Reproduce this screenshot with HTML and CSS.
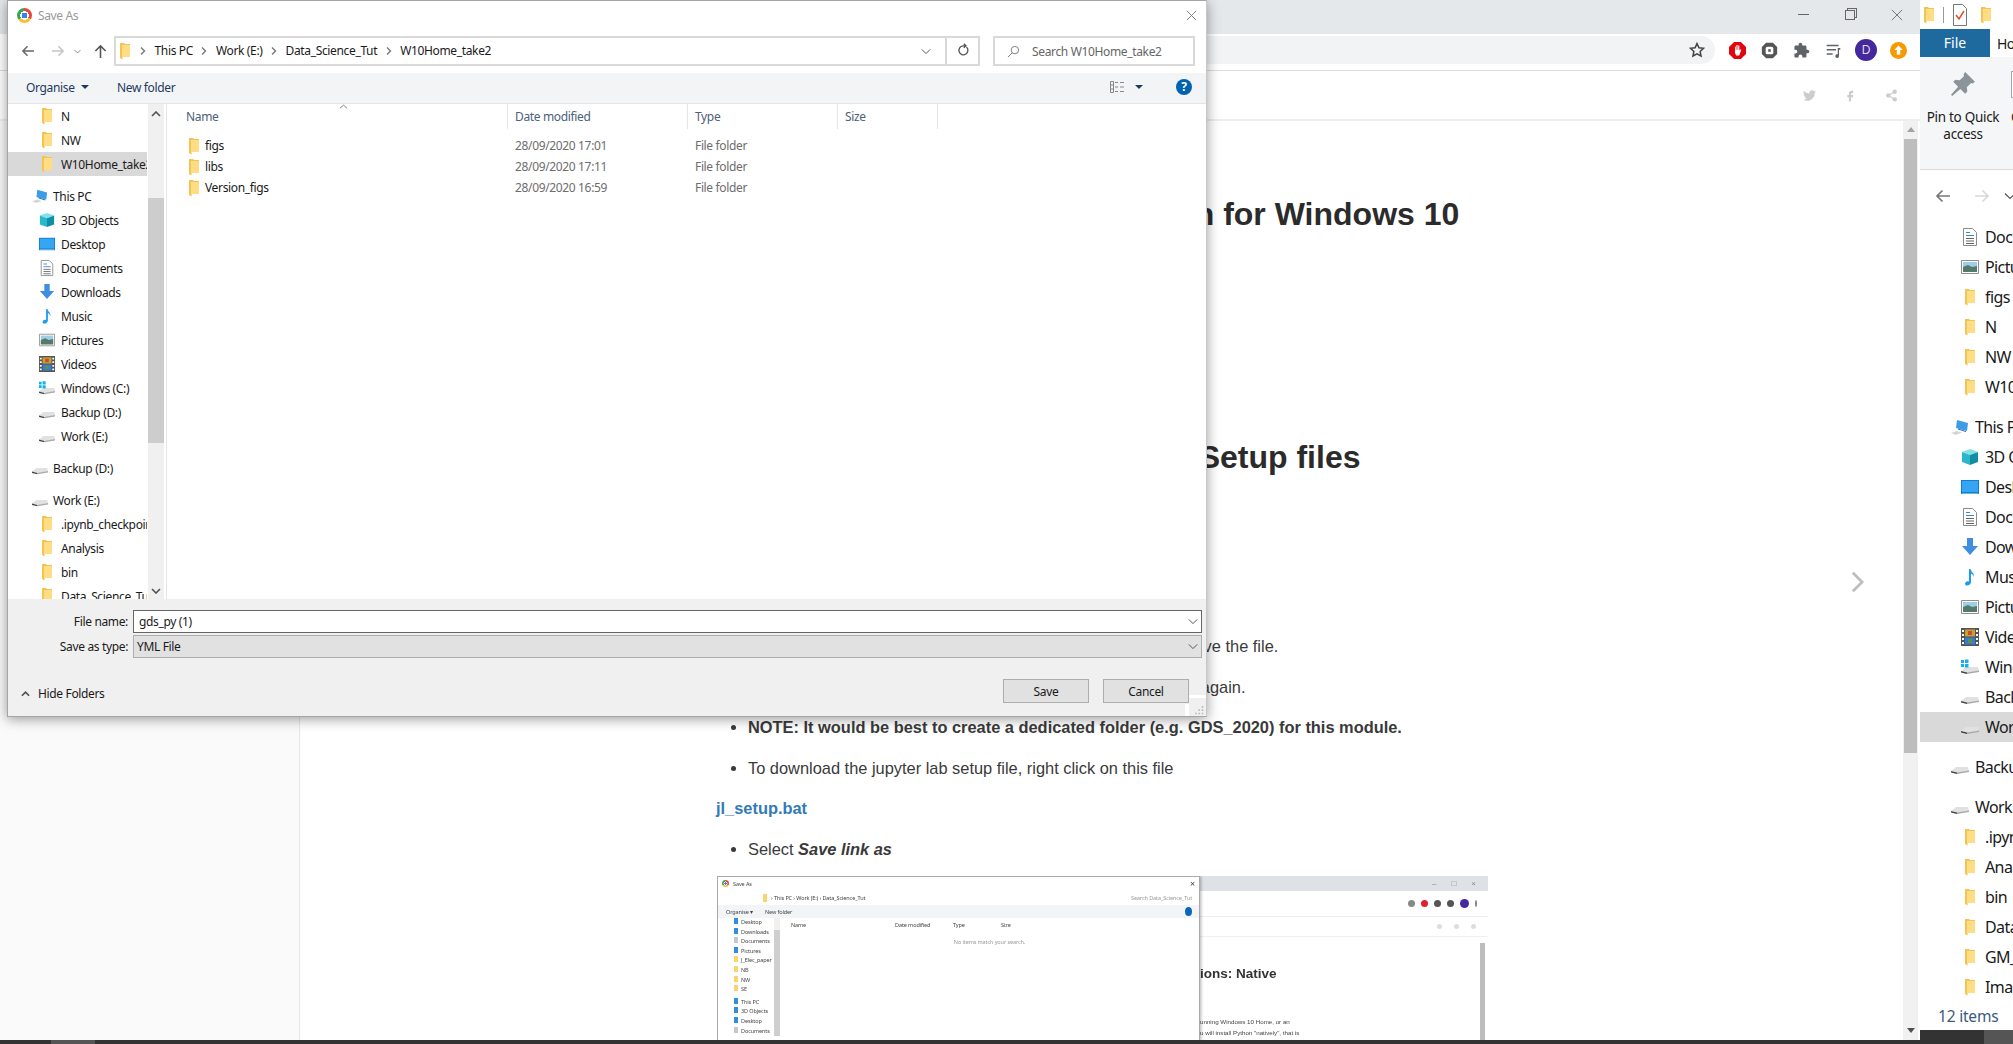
FILE: index.html
```html
<!DOCTYPE html>
<html lang="en">
<head>
  <meta charset="UTF-8" />
  <title>Save As</title>
  <link rel="stylesheet" href="styles.css">
</head>
<body>
  <svg class="sprites" width="0" height="0">
    <symbol id="folder" viewBox="0 0 16 18">
      <path fill="#f4c453" d="M3 1h4l1 1h5v13H5.500v2.500L3 16z"/>
      <path fill="#fedd85" d="M5 3h8v12H5.500v2.500L5 17z"/>
    </symbol>
    <symbol id="pc" viewBox="0 0 18 18">
      <path fill="#3c9de6" d="M6 2l11 3-1 8-11-3z"/>
      <path fill="#1d6fb8" d="M7 10.500l8 2.500v1l-8-2.500z"/>
      <path fill="#d3d6d9" d="M0 15l6-2 5 1.500-6 2.500z"/>
    </symbol>
    <symbol id="cube" viewBox="0 0 18 18">
      <path fill="#7fe3ea" d="M9 1l8 3-8 3-8-3z"/>
      <path fill="#2bb7c9" d="M1 4l8 3v10l-8-3z"/>
      <path fill="#0f8ea6" d="M17 4L9 7v10l8-3z"/>
    </symbol>
    <symbol id="desktop" viewBox="0 0 18 18">
      <path fill="#0f7fd6" d="M0 2h18v14H0z"/>
      <path fill="#36a6f2" d="M1 3h16v11H1z"/>
      <path fill="#cfe9fb" d="M1 15h16v.5H1z"/>
    </symbol>
    <symbol id="doc" viewBox="0 0 18 18">
      <path fill="#fff" stroke="#8b8b8b" d="M2.500.5h9l4 4v13h-13z"/>
      <path fill="none" stroke="#3a86c8" d="M5 4.500h4M5 7.500h8"/>
      <path fill="none" stroke="#666" d="M5 10.500h8M5 13h8M5 15.500h8"/>
    </symbol>
    <symbol id="download" viewBox="0 0 18 18">
      <path fill="#3f8fe0" d="M6 0h6v8h5l-8 9-8-9h5z"/>
    </symbol>
    <symbol id="music" viewBox="0 0 18 18">
      <path fill="#1c9bf0" d="M8 1h1.500c.5 3 4 4 3.500 8-.5-2-2-3-3-3.200V14c0 2-2 3.500-4 3.500S3.500 16 4.500 14.500 7 13 8 13.500z"/>
    </symbol>
    <symbol id="pictures" viewBox="0 0 18 18">
      <path fill="#fff" stroke="#8f8f8f" d="M.5 2.500h17v13H.5z"/>
      <path fill="#9fcfe8" d="M2 4h14v5H2z"/>
      <path fill="#55796a" d="M2 9l5-2 4 2 5-1v6H2z"/>
    </symbol>
    <symbol id="videos" viewBox="0 0 18 18">
      <path fill="#555" d="M0 0h18v18H0z"/>
      <path fill="#c9a12c" d="M4 1.500h10v7H4z"/>
      <path fill="#2f7fd8" d="M4 9.500h10v7H4z"/>
      <path fill="#c94a3a" d="M7 3h4v4H7z"/>
      <path fill="#6d8d3a" d="M7 11h4v4H7z"/>
      <path fill="#fff" d="M1 2h2v2H1zM1 6h2v2H1zM1 10h2v2H1zM1 14h2v2H1zM15 2h2v2h-2zM15 6h2v2h-2zM15 10h2v2h-2zM15 14h2v2h-2z"/>
    </symbol>
    <symbol id="drive" viewBox="0 0 18 18">
      <path fill="#dfe1e3" d="M0 13l5-4h12l1 3.500-12 3z"/>
      <path fill="#444" d="M0 13l6 1.500v1.500L0 14.500z"/>
      <path fill="#aaa" d="M6 14.500l12-2V14L6 16z"/>
    </symbol>
    <symbol id="windrive" viewBox="0 0 18 18">
      <path fill="#dfe1e3" d="M0 13l5-4h12l1 3.500-12 3z"/>
      <path fill="#444" d="M0 13l6 1.500v1.500L0 14.500z"/>
      <path fill="#aaa" d="M6 14.500l12-2V14L6 16z"/>
      <path fill="#12b2f2" d="M0 2h3v3H0zM4 1.500h3.500V5H4zM0 6h3v3H0zM4 6h3.500v3.500H4z"/>
    </symbol>
    <symbol id="chev-right" viewBox="0 0 8 10">
      <path fill="none" stroke="#777" stroke-width="1.400" d="M2 1.500L5.500 5 2 8.500"/>
    </symbol>
    <symbol id="chev-down" viewBox="0 0 12 8">
      <path fill="none" stroke="#555" stroke-width="1.200" d="M1 1.500l5 5 5-5"/>
    </symbol>
    <symbol id="arrow-left" viewBox="0 0 16 14">
      <path fill="none" stroke="currentColor" stroke-width="1.700" d="M15 7H2M7.500 1.500L2 7l5.500 5.500"/>
    </symbol>
    <symbol id="arrow-right" viewBox="0 0 16 14">
      <path fill="none" stroke="currentColor" stroke-width="1.700" d="M1 7h13M8.500 1.500L14 7l-5.500 5.500"/>
    </symbol>
  </svg>

  <div class="chrome-win">
    <div class="chrome-titlebar">
      <span class="win-min"></span>
      <span class="win-restore"></span>
      <svg class="win-close" viewBox="0 0 14 14"><path fill="none" stroke="#666" d="M1 1l12 12M13 1L1 13"/></svg>
    </div>
    <div class="chrome-toolbar">
      <div class="url-pill">
        <svg class="star" viewBox="0 0 24 24"><path fill="none" stroke="#444" stroke-width="2" d="M12 3.500l2.600 5.600 6.100.7-4.500 4.200 1.200 6-5.400-3-5.400 3 1.200-6-4.500-4.200 6.100-.7z"/></svg>
      </div>
      <div class="ext-icons">
        <svg class="ext" viewBox="0 0 20 20"><path fill="#e0060c" d="M6 0h8l6 6v8l-6 6H6l-6-6V6z"/><path fill="#fff" d="M7 5.500h1V9h.7V3.500h1.400V9h.7V4h1.400v6l1.300-1.500 1 .7L12 16H8.500L7 13z"/></svg>
        <svg class="ext" viewBox="0 0 20 20"><path fill="#555" d="M6 1h8l5 5v8l-5 5H6l-5-5V6z"/><rect x="5.500" y="5.500" width="9" height="9" rx="2" fill="#fff"/><rect x="8.500" y="8.500" width="3" height="3" fill="#555"/></svg>
        <svg class="ext" viewBox="0 0 24 24"><path fill="#5f6368" d="M20.500 11H19V7c0-1.100-.9-2-2-2h-4V3.500C13 2.120 11.880 1 10.500 1S8 2.120 8 3.500V5H4c-1.100 0-2 .9-2 2v3.800h1.500c1.490 0 2.700 1.210 2.700 2.700s-1.210 2.700-2.700 2.700H2V20c0 1.100.9 2 2 2h3.800v-1.500c0-1.490 1.210-2.700 2.700-2.700s2.700 1.210 2.700 2.700V22H17c1.100 0 2-.9 2-2v-4h1.500c1.380 0 2.500-1.120 2.500-2.500S21.880 11 20.500 11z"/></svg>
        <svg class="ext" viewBox="0 0 20 20"><path fill="none" stroke="#5f6368" stroke-width="1.800" d="M2 4h14M2 9h11M2 14h7"/><path fill="#5f6368" d="M15 7h3v2h-1.500v7.500a2.200 2.200 0 1 1-1.500-2z"/></svg>
        <span class="avatar">D</span>
        <svg class="ext" viewBox="0 0 20 20"><circle cx="10" cy="10" r="10" fill="#f59a00"/><path fill="#fff" d="M10 4l5 5.500h-3V15H8V9.500H5z"/></svg>
      </div>
    </div>
    <div class="site-header">
      <svg class="social" viewBox="0 0 24 24"><path d="M23.950 4.570a10 10 0 0 1-2.820.77 4.960 4.960 0 0 0 2.160-2.720c-.95.55-2 .96-3.120 1.190a4.920 4.920 0 0 0-8.380 4.480C7.690 8.100 4.070 6.130 1.640 3.160a4.820 4.820 0 0 0-.66 2.480c0 1.710.87 3.210 2.190 4.100a4.900 4.900 0 0 1-2.230-.62v.06a4.920 4.920 0 0 0 3.950 4.830c-.72.2-1.490.23-2.220.08a4.930 4.930 0 0 0 4.600 3.420A9.870 9.870 0 0 1 0 19.540a14 14 0 0 0 7.560 2.210c9.050 0 14-7.500 14-13.980 0-.21 0-.42-.02-.63a9.940 9.940 0 0 0 2.460-2.550z"/></svg>
      <svg class="social" viewBox="0 0 24 24"><path d="M14 8h3V3h-3c-3 0-5 2.200-5 5v3H6v4h3v8h4v-8h3.500l.5-4h-4V9c0-.6.4-1 1-1z"/></svg>
      <svg class="social" viewBox="0 0 24 24"><circle cx="18" cy="5" r="4"/><circle cx="6" cy="12" r="4"/><circle cx="18" cy="19" r="4"/><path stroke="#ccc" stroke-width="2" d="M6 12l12-7M6 12l12 7"/></svg>
    </div>
    <div class="site-main">
      <div class="sidebar"></div>
      <div class="article">
        <h1 class="title-a">Python Installation for Windows 10</h1>
        <h2 class="title-b">Download the Setup files</h2>
        <ul class="steps">
          <li>In the Save As dialog, browse to the module folder and then save the file.</li>
          <li>If the name shows gds_py (1), delete old files and download it again.</li>
          <li><b>NOTE: It would be best to create a dedicated folder (e.g. GDS_2020) for this module.</b></li>
          <li>To download the jupyter lab setup file, right click on this file</li>
        </ul>
        <p class="file-link">jl_setup.bat</p>
        <ul class="steps">
          <li>Select <b><i>Save link as</i></b></li>
        </ul>

        <div class="shot">
          <div class="shot-strip">
            <span class="shot-ctl">&#8211;</span><span class="shot-ctl">&#9633;</span><span class="shot-ctl">&#215;</span>
          </div>
          <div class="shot-bar">
            <span class="shot-dot grey"></span><span class="shot-dot red"></span><span class="shot-dot dark"></span><span class="shot-dot dark"></span><span class="shot-dot purple"></span><span class="shot-dot grey small"></span>
          </div>
          <div class="shot-social"><span class="shot-dot pale"></span><span class="shot-dot pale"></span><span class="shot-dot pale"></span></div>
          <div class="shot-page">
            <div class="shot-text">
              <div class="shot-h">ions: Native</div>
              <div class="shot-p">unning Windows 10 Home, or an</div>
              <div class="shot-p">u will install Python "natively", that is</div>
            </div>
            <div class="shot-scroll"></div>
          </div>

          <div class="shot-dialog">
            <div class="shot-dtitle"><span class="logo small"></span>Save As<span class="shot-x">&#215;</span></div>
            <div class="shot-daddr">
              <span class="shot-crumbs"><i class="shot-fold"></i>&#8250; This PC &#8250; Work (E:) &#8250; Data_Science_Tut</span>
              <span class="shot-search">Search Data_Science_Tut</span>
            </div>
            <div class="shot-dtools"><span>Organise &#9662;</span><span>New folder</span><i class="shot-help"></i></div>
            <div class="shot-dbody">
              <div class="shot-nav">
                <div class="blue">Desktop</div>
                <div class="blue">Downloads</div>
                <div class="grey">Documents</div>
                <div class="blue">Pictures</div>
                <div>J_Elec_paper</div>
                <div>NB</div>
                <div>NW</div>
                <div>SE</div>
                <div class="blue top">This PC</div>
                <div class="blue">3D Objects</div>
                <div class="blue">Desktop</div>
                <div class="grey">Documents</div>
              </div>
              <div class="shot-files">
                <div class="shot-cols"><span>Name</span><span>Date modified</span><span>Type</span><span>Size</span></div>
                <div class="shot-empty">No items match your search.</div>
              </div>
            </div>
          </div>
        </div>
      </div>
      <div class="page-scroll">
        <span class="tri up"></span>
        <div class="page-thumb"></div>
        <span class="tri down"></span>
      </div>
      <svg class="next-arrow" viewBox="0 0 14 24"><path fill="none" stroke="#bdbdbd" stroke-width="3" d="M2 2l10 10L2 22"/></svg>
    </div>
  </div>

  <div class="explorer">
    <div class="ex-quick">
      <svg class="ico"><use href="#folder"/></svg>
      <span class="ex-sep"></span>
      <svg class="ex-check" viewBox="0 0 14 22"><path fill="#fff" stroke="#777" d="M.5.500h9l4 4v17H.5z"/><path fill="none" stroke="#e2502a" stroke-width="1.500" d="M3 11l3 4 5-8"/></svg>
      <svg class="ico"><use href="#folder"/></svg>
    </div>
    <div class="ex-tabs"><span class="ex-file">File</span><span class="ex-home">Home</span></div>
    <div class="ex-ribbon">
      <div class="ex-pin">
        <svg class="pin-ico" viewBox="0 0 24 24"><path fill="#8a9499" d="M14 1l9 9-2 1.500-1.500-.5-4 4 .5 4-2 2-4.500-4.500L2 23l-1-1 6.500-7.500L3 10l2-2 4 .5 4-4-.5-1.500z"/></svg>
        <span>Pin to Quick access</span>
      </div>
      <div class="ex-copy">
        <span class="copy-box"></span>
        <span>Copy</span>
      </div>
    </div>
    <div class="ex-nav">
      <svg class="ex-back"><use href="#arrow-left"/></svg>
      <svg class="ex-forward"><use href="#arrow-right"/></svg>
      <svg class="ex-drop"><use href="#chev-down"/></svg>
    </div>
    <div class="ex-tree">
      <div class="ex-row"><svg class="ex-ico"><use href="#doc"/></svg>Documents</div>
      <div class="ex-row"><svg class="ex-ico"><use href="#pictures"/></svg>Pictures</div>
      <div class="ex-row"><svg class="ex-ico"><use href="#folder"/></svg>figs</div>
      <div class="ex-row"><svg class="ex-ico"><use href="#folder"/></svg>N</div>
      <div class="ex-row"><svg class="ex-ico"><use href="#folder"/></svg>NW</div>
      <div class="ex-row"><svg class="ex-ico"><use href="#folder"/></svg>W10Home_take2</div>
      <div class="ex-row root"><svg class="ex-ico"><use href="#pc"/></svg>This PC</div>
      <div class="ex-row"><svg class="ex-ico"><use href="#cube"/></svg>3D Objects</div>
      <div class="ex-row"><svg class="ex-ico"><use href="#desktop"/></svg>Desktop</div>
      <div class="ex-row"><svg class="ex-ico"><use href="#doc"/></svg>Documents</div>
      <div class="ex-row"><svg class="ex-ico"><use href="#download"/></svg>Downloads</div>
      <div class="ex-row"><svg class="ex-ico"><use href="#music"/></svg>Music</div>
      <div class="ex-row"><svg class="ex-ico"><use href="#pictures"/></svg>Pictures</div>
      <div class="ex-row"><svg class="ex-ico"><use href="#videos"/></svg>Videos</div>
      <div class="ex-row"><svg class="ex-ico"><use href="#windrive"/></svg>Windows (C:)</div>
      <div class="ex-row"><svg class="ex-ico"><use href="#drive"/></svg>Backup (D:)</div>
      <div class="ex-row active"><svg class="ex-ico"><use href="#drive"/></svg>Work (E:)</div>
      <div class="ex-row root"><svg class="ex-ico"><use href="#drive"/></svg>Backup (D:)</div>
      <div class="ex-row root"><svg class="ex-ico"><use href="#drive"/></svg>Work (E:)</div>
      <div class="ex-row"><svg class="ex-ico"><use href="#folder"/></svg>.ipynb_checkpoints</div>
      <div class="ex-row"><svg class="ex-ico"><use href="#folder"/></svg>Analysis</div>
      <div class="ex-row"><svg class="ex-ico"><use href="#folder"/></svg>bin</div>
      <div class="ex-row"><svg class="ex-ico"><use href="#folder"/></svg>Data_Science_Tut</div>
      <div class="ex-row"><svg class="ex-ico"><use href="#folder"/></svg>GM_paper</div>
      <div class="ex-row"><svg class="ex-ico"><use href="#folder"/></svg>Images</div>
    </div>
    <div class="ex-status">12 items</div>
  </div>

  <div class="taskbar"><span class="task-item"></span></div>
  <div class="taskbar-right"><span class="task-item-r"></span></div>

  <div class="dialog">
    <div class="dlg-title">
      <span class="logo"></span>
      <span class="dlg-caption">Save As</span>
      <svg class="dlg-close" viewBox="0 0 12 12"><path fill="none" stroke="#777" d="M1 1l10 10M11 1L1 11"/></svg>
    </div>
    <div class="dlg-address">
      <div class="dlg-navbtns">
        <svg class="nav-back"><use href="#arrow-left"/></svg>
        <svg class="nav-forward"><use href="#arrow-right"/></svg>
        <svg class="nav-drop"><use href="#chev-down"/></svg>
        <svg class="nav-up" viewBox="0 0 14 16"><path fill="none" stroke="#555" stroke-width="1.700" d="M7 15V2M1.500 7.500L7 2l5.500 5.500"/></svg>
      </div>
      <div class="addr-box">
        <svg class="ico"><use href="#folder"/></svg>
        <svg class="crumb-sep"><use href="#chev-right"/></svg><span>This PC</span>
        <svg class="crumb-sep"><use href="#chev-right"/></svg><span>Work (E:)</span>
        <svg class="crumb-sep"><use href="#chev-right"/></svg><span>Data_Science_Tut</span>
        <svg class="crumb-sep"><use href="#chev-right"/></svg><span>W10Home_take2</span>
        <svg class="addr-drop"><use href="#chev-down"/></svg>
        <span class="addr-refresh">
          <svg viewBox="0 0 12 14"><path fill="none" stroke="#555" stroke-width="1.300" d="M9.500 4A4.500 4.500 0 1 1 6 2.800H9M6.800.8L9 2.800 6.800 4.800"/></svg>
        </span>
      </div>
      <div class="search-box">
        <svg viewBox="0 0 14 14"><circle cx="8.500" cy="5.500" r="4" fill="none" stroke="#777"/><path stroke="#777" d="M5.500 8.500L1 13"/></svg>
        <span>Search W10Home_take2</span>
      </div>
    </div>
    <div class="dlg-tools">
      <span class="tool organise">Organise<i class="caret"></i></span>
      <span class="tool">New folder</span>
      <span class="tool-gap"></span>
      <svg class="view-ico" viewBox="0 0 16 14"><path fill="none" stroke="#888" d="M.5 1.500h3v11h-3zM.5 5h3M.5 9h3"/><path stroke="#888" d="M5 2.500h3M10 2.500h4M5 7h3M10 7h4M5 11.500h3M10 11.500h4"/></svg>
      <i class="caret view-caret"></i>
      <span class="help">?</span>
    </div>
    <div class="dlg-body">
      <div class="dlg-tree">
        <div class="tree-row"><svg class="ico"><use href="#folder"/></svg>N</div>
        <div class="tree-row"><svg class="ico"><use href="#folder"/></svg>NW</div>
        <div class="tree-row active"><svg class="ico"><use href="#folder"/></svg>W10Home_take2</div>
        <div class="tree-row root"><svg class="ico"><use href="#pc"/></svg>This PC</div>
        <div class="tree-row"><svg class="ico"><use href="#cube"/></svg>3D Objects</div>
        <div class="tree-row"><svg class="ico"><use href="#desktop"/></svg>Desktop</div>
        <div class="tree-row"><svg class="ico"><use href="#doc"/></svg>Documents</div>
        <div class="tree-row"><svg class="ico"><use href="#download"/></svg>Downloads</div>
        <div class="tree-row"><svg class="ico"><use href="#music"/></svg>Music</div>
        <div class="tree-row"><svg class="ico"><use href="#pictures"/></svg>Pictures</div>
        <div class="tree-row"><svg class="ico"><use href="#videos"/></svg>Videos</div>
        <div class="tree-row"><svg class="ico"><use href="#windrive"/></svg>Windows (C:)</div>
        <div class="tree-row"><svg class="ico"><use href="#drive"/></svg>Backup (D:)</div>
        <div class="tree-row"><svg class="ico"><use href="#drive"/></svg>Work (E:)</div>
        <div class="tree-row root"><svg class="ico"><use href="#drive"/></svg>Backup (D:)</div>
        <div class="tree-row root"><svg class="ico"><use href="#drive"/></svg>Work (E:)</div>
        <div class="tree-row"><svg class="ico"><use href="#folder"/></svg>.ipynb_checkpoints</div>
        <div class="tree-row"><svg class="ico"><use href="#folder"/></svg>Analysis</div>
        <div class="tree-row"><svg class="ico"><use href="#folder"/></svg>bin</div>
        <div class="tree-row"><svg class="ico"><use href="#folder"/></svg>Data_Science_Tut</div>
      </div>
      <div class="tree-scroll">
        <svg class="sb-arrow" viewBox="0 0 10 6"><path fill="none" stroke="#505050" stroke-width="1.600" d="M1 5l4-4 4 4"/></svg>
        <div class="tree-thumb"></div>
        <svg class="sb-arrow bottom" viewBox="0 0 10 6"><path fill="none" stroke="#505050" stroke-width="1.600" d="M1 1l4 4 4-4"/></svg>
      </div>
      <div class="dlg-files">
        <div class="file-cols">
          <span class="col name">Name</span>
          <span class="col date">Date modified</span>
          <span class="col type">Type</span>
          <span class="col size">Size</span>
          <svg class="sort-up" viewBox="0 0 10 5"><path fill="none" stroke="#777" d="M1 4.500L5 1l4 3.500"/></svg>
        </div>
        <div class="file-row">
          <span class="fname"><svg class="ico"><use href="#folder"/></svg>figs</span><span class="fdate">28/09/2020 17:01</span><span class="ftype">File folder</span>
        </div>
        <div class="file-row">
          <span class="fname"><svg class="ico"><use href="#folder"/></svg>libs</span><span class="fdate">28/09/2020 17:11</span><span class="ftype">File folder</span>
        </div>
        <div class="file-row">
          <span class="fname"><svg class="ico"><use href="#folder"/></svg>Version_figs</span><span class="fdate">28/09/2020 16:59</span><span class="ftype">File folder</span>
        </div>
      </div>
    </div>
    <div class="dlg-bottom">
      <div class="field">
        <label>File name:</label>
        <div class="combo">gds_py (1)<svg><use href="#chev-down"/></svg></div>
      </div>
      <div class="field">
        <label>Save as type:</label>
        <div class="combo readonly">YML File<svg><use href="#chev-down"/></svg></div>
      </div>
      <div class="dlg-actions">
        <span class="hide-folders">
          <svg viewBox="0 0 10 6"><path fill="none" stroke="#505050" stroke-width="1.800" d="M1 5l4-4 4 4"/></svg>
          Hide Folders
        </span>
        <button class="btn">Save</button>
        <button class="btn">Cancel</button>
      </div>
      <span class="grip-corner">
        <svg class="grip" viewBox="0 0 12 12"><path fill="#bbb" d="M8 0h2v2H8zM4 4h2v2H4zM8 4h2v2H8zM0 8h2v2H0zM4 8h2v2H4zM8 8h2v2H8z"/></svg>
      </span>
    </div>
  </div>
</body>
</html>
```
FILE: styles.css
```css
* {
  margin: 0;
  padding: 0;
  box-sizing: border-box;
}

body {
  position: relative;
  width: 2013px;
  height: 1044px;
  overflow: hidden;
  display: flex;
  flex-wrap: wrap;
  align-content: flex-start;
  background: #333;
  font-family: "Noto Sans", sans-serif;
  font-size: 12px;
  color: #1a1a1a;
}

.sprites {
  position: absolute;
}

.ico {
  width: 16px;
  height: 18px;
  flex: none;
}

/* browser behind the dialog */
.chrome-win {
  width: 1920px;
  height: 1040px;
  display: flex;
  flex-direction: column;
  background: #fff;
  font-family: "Liberation Sans", sans-serif;
}

.chrome-titlebar {
  height: 34px;
  background: #e5e8eb;
  display: flex;
  align-items: center;
  justify-content: flex-end;
  padding: 0 17px 5px 0;
  gap: 36px;
}

.win-min {
  width: 11px;
  height: 1px;
  background: #666;
}

.win-restore {
  width: 10px;
  height: 10px;
  border: 1px solid #666;
  box-shadow: 2px -2px 0 -1px #e5e8eb, 2px -2px 0 0 #666;
}

.win-close {
  width: 12px;
  height: 12px;
}

.chrome-toolbar {
  height: 37px;
  display: flex;
  align-items: center;
  padding: 0 13px 4px 8px;
  border-bottom: 1px solid #dcdcdc;
}

.url-pill {
  flex: 1;
  height: 28px;
  background: #f1f3f4;
  border-radius: 14px;
  display: flex;
  align-items: center;
  justify-content: flex-end;
  padding-right: 9px;
}

.star {
  width: 18px;
  height: 18px;
}

.ext-icons {
  display: flex;
  align-items: center;
  gap: 15px;
  margin-left: 14px;
}

.ext {
  width: 17px;
  height: 17px;
}

.avatar {
  width: 22px;
  height: 22px;
  border-radius: 50%;
  background: #4527a0;
  color: #ddd;
  font-size: 12px;
  text-align: center;
  line-height: 22px;
  margin: 0 -2px;
}

.site-header {
  height: 50px;
  border-bottom: 2px solid #eee;
  display: flex;
  align-items: center;
  justify-content: flex-end;
  gap: 28px;
  padding: 0 22px 0 0;
}

.social {
  width: 13px;
  height: 13px;
  fill: #ccc;
}

.site-main {
  flex: 1;
  display: flex;
  position: relative;
  min-height: 0;
}

.sidebar {
  width: 300px;
  background: #fafafa;
  border-right: 1px solid #e6e6e6;
}

.article {
  flex: 1;
  padding: 73px 0 0 416px;
  overflow: hidden;
  color: #3a3a3a;
  font-size: 16.400px;
  line-height: 24px;
}

.title-a,
.title-b {
  font-size: 32px;
  line-height: 40px;
  font-weight: bold;
  color: #2b2b2b;
}

.title-a {
  padding-left: 212px;
}

.title-b {
  margin-top: 203px;
  padding-left: 264px;
}

.steps {
  padding-left: 32px;
  list-style: disc;
}

.title-b + .steps {
  margin-top: 157px;
}

.steps li {
  margin-bottom: 16.500px;
}

.file-link {
  font-weight: bold;
  color: #337ab7;
  margin-bottom: 16.500px;
}

.page-scroll {
  width: 15px;
  margin: 0 2px 0 3px;
  background: #f1f1f1;
  display: flex;
  flex-direction: column;
  align-items: center;
  padding-top: 6px;
}

.page-thumb {
  width: 13px;
  height: 614px;
  margin-top: 7px;
  background: #bdbdbd;
}

.tri {
  width: 0;
  height: 0;
  border-left: 4px solid transparent;
  border-right: 4px solid transparent;
}

.tri.up {
  border-bottom: 5px solid #a3a3a3;
}

.tri.down {
  border-top: 5px solid #505050;
  margin-top: 275px;
}

.next-arrow {
  position: absolute;
  left: 1851px;
  top: 449px;
  width: 13px;
  height: 24px;
}

/* picture in the article: a small copy of the same screen */
.shot {
  position: relative;
  width: 771px;
  height: 164px;
  margin: -1px 0 0 1px;
  background: #fff;
  overflow: hidden;
  filter: blur(0.4px);
  font-size: 6px;
  line-height: 8px;
  color: #444;
}

.shot-strip {
  height: 15px;
  background: #dee1e6;
  display: flex;
  justify-content: flex-end;
  align-items: center;
  gap: 15px;
  padding-right: 12px;
  font-size: 8px;
  color: #888;
}

.shot-bar {
  height: 26px;
  border-bottom: 1px solid #eee;
  display: flex;
  justify-content: flex-end;
  align-items: center;
  gap: 6px;
  padding-right: 11px;
}

.shot-dot {
  width: 7px;
  height: 7px;
  border-radius: 50%;
  background: #888;
}

.shot-dot.red { background: #e0202a; }
.shot-dot.dark { background: #555; }
.shot-dot.purple { background: #4527a0; width: 9px; height: 9px; }
.shot-dot.small { width: 2px; height: 7px; }
.shot-dot.pale { background: #ddd; width: 5px; height: 5px; }

.shot-social {
  height: 20px;
  border-bottom: 1px solid #f0f0f0;
  display: flex;
  justify-content: flex-end;
  align-items: center;
  gap: 12px;
  padding-right: 12px;
}

.shot-page {
  display: flex;
  justify-content: space-between;
  padding-right: 3px;
}

.shot-text {
  padding: 29px 0 0 483px;
  font-family: "Liberation Sans", sans-serif;
  font-size: 6.200px;
  line-height: 11px;
}

.shot-h {
  font-size: 13.500px;
  font-weight: bold;
  line-height: 16px;
  color: #333;
  margin-bottom: 34px;
}

.shot-scroll {
  width: 5px;
  height: 100px;
  margin-top: 6px;
  background: #bdbdbd;
}

.shot-dialog {
  position: absolute;
  left: 0;
  top: 0;
  width: 483px;
  height: 165px;
  background: #fff;
  border: 1px solid #aaa;
  border-bottom: 0;
  box-shadow: 1px 0 3px rgba(0, 0, 0, 0.3);
  font-family: "Noto Sans", sans-serif;
  font-size: 5.500px;
  letter-spacing: -0.1px;
  white-space: nowrap;
}

.shot-dtitle {
  height: 13px;
  display: flex;
  align-items: center;
  gap: 4px;
  padding: 0 4px;
}

.shot-x {
  margin-left: auto;
  font-size: 9px;
}

.shot-daddr {
  height: 15px;
  display: flex;
  align-items: center;
  padding-left: 45px;
}

.shot-crumbs {
  flex: 1;
  display: flex;
  gap: 4px;
  align-items: center;
}

.shot-fold {
  width: 4px;
  height: 8px;
  background: #fbd46d;
}

.shot-search {
  width: 68px;
  color: #999;
}

.shot-dtools {
  height: 13px;
  background: #f3f4f6;
  display: flex;
  align-items: center;
  gap: 12px;
  padding: 0 7px 0 8px;
}

.shot-help {
  margin-left: auto;
  width: 7px;
  height: 9px;
  border-radius: 50%;
  background: #0a66b8;
}

.shot-dbody {
  display: flex;
}

.shot-nav {
  width: 62px;
  padding-left: 23px;
  background: linear-gradient(#f0f0f0 0 12px, #cfcfcf 12px) right / 6px 100% no-repeat;
}

.shot-nav div {
  height: 9.600px;
  line-height: 9.600px;
  padding-left: 7px;
  margin-left: -7px;
  white-space: nowrap;
  overflow: hidden;
}

.shot-nav div::before {
  content: '';
  display: inline-block;
  width: 4px;
  height: 6px;
  margin: 0 3px 0 -7px;
  background: #fbd46d;
}

.shot-nav .blue::before {
  background: #2f8ee0;
}

.shot-nav .grey::before {
  background: #c4c8cc;
}

.shot-nav .top {
  margin-top: 3px;
}

.shot-files {
  flex: 1;
}

.shot-cols {
  display: grid;
  grid-template-columns: 104px 58px 48px 50px;
  padding-left: 11px;
  height: 14px;
  align-items: center;
}

.shot-empty {
  text-align: center;
  padding-top: 6px;
  color: #999;
}

/* explorer on the right edge */
.explorer {
  width: 93px;
  height: 1030px;
  background: #fff;
  overflow: hidden;
  display: flex;
  flex-direction: column;
  font-size: 16px;
  letter-spacing: -0.6px;
  white-space: nowrap;
}

.ex-quick {
  height: 29px;
  flex: none;
  display: flex;
  align-items: center;
  padding-left: 1px;
}

.ex-sep {
  width: 1px;
  height: 16px;
  background: #999;
  margin: 0 9px 0 6px;
  flex: none;
}

.ex-check {
  width: 14px;
  height: 22px;
  margin-right: 11px;
  flex: none;
}

.ex-tabs {
  height: 28px;
  flex: none;
  display: flex;
  align-items: center;
  font-size: 14px;
}

.ex-file {
  flex: none;
  width: 70px;
  height: 28px;
  line-height: 28px;
  background: #1e6a9e;
  color: #fff;
  text-align: center;
  margin-right: 7px;
  letter-spacing: 0;
}

.ex-home {
  flex: none;
}

.ex-ribbon {
  height: 113px;
  flex: none;
  background: #f5f6f7;
  border-bottom: 1px solid #dadbdc;
  display: flex;
  font-size: 13.500px;
  letter-spacing: -0.3px;
  line-height: 17px;
}

.ex-pin {
  width: 86px;
  padding-top: 14px;
  flex: none;
  display: flex;
  flex-direction: column;
  align-items: center;
  text-align: center;
  white-space: normal;
}

.pin-ico {
  width: 26px;
  height: 26px;
  margin-bottom: 12px;
  flex: none;
}

.pin-ico + span {
  width: 86px;
}

.ex-copy {
  flex: none;
  padding: 14px 0 0 5px;
}

.copy-box {
  display: block;
  width: 30px;
  height: 27px;
  border: 1px solid #9aa7b5;
  background: #fff;
  margin-bottom: 11px;
}

.ex-nav {
  height: 52px;
  flex: none;
  display: flex;
  align-items: center;
  color: #777;
  padding-left: 15px;
}

.ex-back {
  width: 16px;
  height: 14px;
  flex: none;
}

.ex-forward {
  width: 16px;
  height: 14px;
  margin-left: 23px;
  color: #d8d8d8;
  flex: none;
}

.ex-drop {
  width: 12px;
  height: 8px;
  margin-left: 14px;
  flex: none;
}

.ex-tree {
  flex: 1;
}

.ex-row {
  height: 30px;
  display: flex;
  align-items: center;
  gap: 6px;
  padding-left: 41px;
  color: #1a1a1a;
}

.ex-row.root {
  padding-left: 31px;
  margin-top: 10px;
}

.ex-row.active {
  background: #d9d9d9;
}

.ex-ico {
  width: 18px;
  height: 18px;
  flex: none;
}

.ex-status {
  height: 28px;
  flex: none;
  line-height: 28px;
  padding-left: 18px;
  color: #3b5a80;
  font-size: 15.500px;
  letter-spacing: -0.2px;
}

.taskbar {
  width: 1920px;
  height: 4px;
  background: #333;
}

.task-item {
  display: block;
  width: 44px;
  height: 4px;
  margin-left: 51px;
  background: #555;
}

.taskbar-right {
  position: absolute;
  left: 1920px;
  top: 1030px;
  width: 93px;
  height: 14px;
  background: #333;
}

.task-item-r {
  display: block;
  width: 29px;
  height: 14px;
  margin-left: 64px;
  background: #555;
}

/* save as dialog */
.dialog {
  position: absolute;
  left: 7px;
  top: 0;
  width: 1200px;
  height: 717px;
  background: #fff;
  border: 1px solid #a5a5a5;
  border-right-color: #c8c8c8;
  box-shadow: 0 2px 12px rgba(0, 0, 0, 0.4);
  display: flex;
  flex-direction: column;
  letter-spacing: -0.350px;
}

.dlg-title {
  height: 35px;
  flex: none;
  display: flex;
  align-items: center;
  padding: 0 9px 6px 9px;
}

.logo {
  width: 15px;
  height: 15px;
  flex: none;
  border-radius: 50%;
  background:
    radial-gradient(circle, #3f7fe8 0 27%, #fff 28% 40%, transparent 41%),
    conic-gradient(#e8453c 0 33%, #f6c233 33% 66%, #34a853 66%);
}

.logo.small {
  width: 7px;
  height: 7px;
}

.dlg-caption {
  margin-left: 6px;
  color: #999;
}

.dlg-close {
  margin-left: auto;
  width: 11px;
  height: 11px;
}

.dlg-address {
  height: 37px;
  flex: none;
  display: flex;
  padding-bottom: 7px;
}

.dlg-navbtns {
  width: 106px;
  display: flex;
  align-items: center;
  padding-left: 13px;
  color: #666;
}

.nav-back {
  width: 14px;
  height: 12px;
}

.nav-forward {
  width: 14px;
  height: 12px;
  margin-left: 16px;
  color: #c4c4c4;
}

.nav-drop {
  width: 7px;
  height: 5px;
  margin-left: 9px;
}

.nav-up {
  width: 13px;
  height: 15px;
  margin-left: 13px;
}

.addr-box {
  width: 866px;
  border: 2px solid #d9d9d9;
  display: flex;
  align-items: center;
  padding-left: 1px;
  color: #1a1a1a;
}

.addr-box span {
  padding-bottom: 2px;
}

.crumb-sep {
  width: 8px;
  height: 10px;
  margin: 0 7.500px;
  flex: none;
}

.addr-box .crumb-sep:nth-of-type(2) {
  margin-left: 6px;
}

.addr-drop {
  width: 10px;
  height: 7px;
  margin-left: auto;
  margin-right: 14px;
}

.addr-refresh {
  width: 33px;
  height: 100%;
  border-left: 2px solid #d9d9d9;
  display: flex;
  align-items: center;
  justify-content: center;
}

.addr-refresh svg {
  width: 12px;
  height: 14px;
}

.search-box {
  width: 202px;
  margin-left: 13px;
  border: 2px solid #d9d9d9;
  display: flex;
  align-items: center;
  padding-left: 12px;
  gap: 12px;
  color: #666;
}

.search-box svg {
  width: 13px;
  height: 13px;
  flex: none;
}

.dlg-tools {
  height: 31px;
  flex: none;
  background: #f3f4f6;
  border-bottom: 1px solid #e5e5e5;
  display: flex;
  align-items: center;
  padding: 0 14px 2px 18px;
  color: #1e3a5f;
}

.tool.organise {
  display: flex;
  align-items: center;
  width: 91px;
}

.caret {
  width: 0;
  height: 0;
  margin-left: 6px;
  border-left: 4px solid transparent;
  border-right: 4px solid transparent;
  border-top: 4px solid #1e3a5f;
}

.tool-gap {
  flex: 1;
}

.view-ico {
  width: 16px;
  height: 14px;
}

.view-caret {
  margin: 0 33px 0 9px;
}

.help {
  width: 16px;
  height: 16px;
  border-radius: 50%;
  background: #0063b1;
  color: #fff;
  font-weight: bold;
  text-align: center;
  line-height: 16px;
}

.dlg-body {
  flex: 1;
  min-height: 0;
  display: flex;
}

.dlg-tree {
  width: 139px;
  overflow: hidden;
  white-space: nowrap;
}

.tree-row {
  height: 24px;
  display: flex;
  align-items: center;
  gap: 6px;
  padding-left: 31px;
}

.tree-row.root {
  padding-left: 24px;
  gap: 5px;
  margin-top: 8px;
}

.tree-row.active {
  background: #d9d9d9;
}

.tree-scroll {
  width: 16px;
  margin-left: 1px;
  background: #f0f0f0;
  position: relative;
  flex: none;
  display: flex;
  flex-direction: column;
  padding-top: 94px;
}

.sb-arrow {
  position: absolute;
  left: 3px;
  top: 7px;
  width: 10px;
  height: 6px;
}

.sb-arrow.bottom {
  top: auto;
  bottom: 5px;
}

.tree-thumb {
  height: 245px;
  background: #cdcdcd;
}

.dlg-files {
  flex: 1;
  margin-left: 2px;
  border-left: 1px solid #e5e5e5;
  min-width: 0;
}

.file-cols {
  position: relative;
  height: 25px;
  display: grid;
  grid-template-columns: 341px 180px 150px 100px;
  margin-bottom: 6px;
  color: #4c607a;
}

.col {
  border-right: 1px solid #e5e5e5;
  padding-left: 7px;
  line-height: 25px;
}

.col.name {
  padding-left: 19px;
}

.sort-up {
  position: absolute;
  left: 172px;
  top: 0;
  width: 9px;
  height: 5px;
}

.file-row {
  height: 21px;
  display: grid;
  grid-template-columns: 341px 180px 150px;
  align-items: center;
  color: #6d6d6d;
}

.fname {
  display: flex;
  align-items: center;
  gap: 3px;
  padding-left: 19px;
  color: #1a1a1a;
}

.fdate,
.ftype {
  padding-left: 7px;
}

.dlg-bottom {
  height: 117px;
  flex: none;
  position: relative;
  background: #f0f0f0;
  padding-top: 11px;
}

.field {
  height: 23px;
  display: flex;
  align-items: center;
  margin-bottom: 2px;
}

.field label {
  width: 120px;
  text-align: right;
  margin-right: 5px;
}

.combo {
  flex: none;
  width: 1069px;
  height: 23px;
  border: 1px solid #666;
  background: #fff;
  padding-left: 5px;
  line-height: 21px;
  display: flex;
  justify-content: space-between;
  align-items: center;
}

.combo.readonly {
  background: #e1e1e1;
  border-color: #adadad;
  padding-left: 3px;
}

.combo svg {
  width: 10px;
  height: 7px;
  margin-right: 3px;
}

.dlg-actions {
  display: flex;
  align-items: center;
  margin-top: 21px;
  padding-right: 17px;
}

.hide-folders {
  display: flex;
  align-items: center;
  gap: 8px;
  padding: 5px 0 0 13px;
  margin-right: auto;
}

.hide-folders svg {
  width: 9px;
  height: 6px;
}

.btn {
  width: 86px;
  height: 24px;
  margin-left: 14px;
  border: 1px solid #adadad;
  background: #e1e1e1;
  font: inherit;
  letter-spacing: inherit;
  color: #1a1a1a;
}

/* the corner of the dialog did not repaint in the original grab */
.grip-corner {
  position: absolute;
  right: 0;
  bottom: 0;
  width: 21px;
  height: 12px;
  background: #f0f0f0;
  border-left: 4px solid #fff;
}

.grip-corner::before {
  content: '';
  position: absolute;
  right: 0;
  top: -9px;
  width: 17px;
  height: 3px;
  background: #fff;
}

.grip {
  position: absolute;
  right: 1px;
  bottom: 0;
  width: 10px;
  height: 10px;
}
```
